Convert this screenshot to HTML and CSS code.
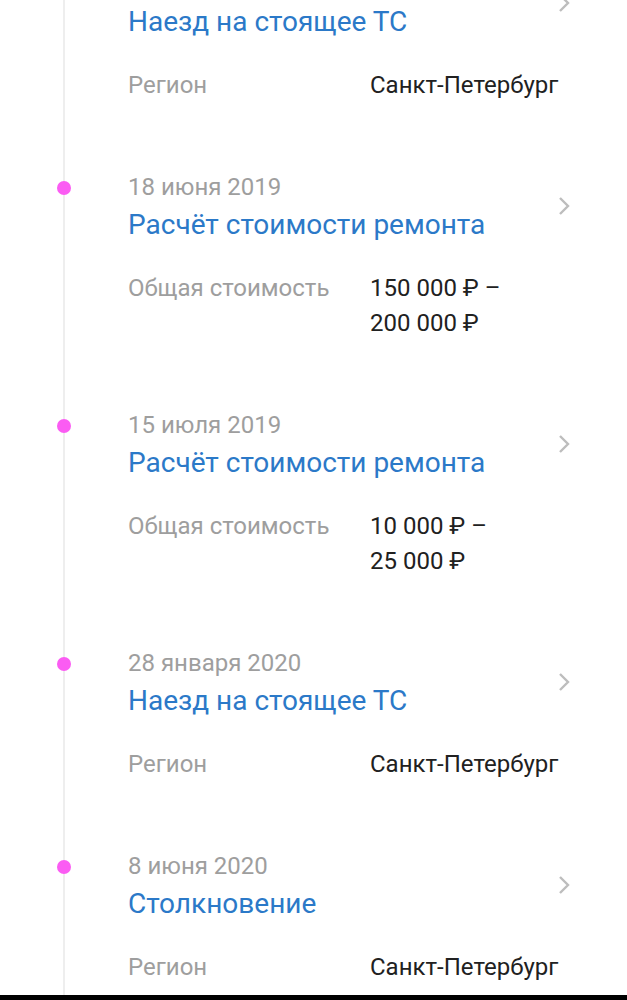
FILE: index.html
```html
<!DOCTYPE html>
<html lang="ru">

<head>
    <meta charset="UTF-8">
    <meta name="viewport" content="width=device-width, initial-scale=1.0">
    <title>История автомобиля</title>
    <link rel="stylesheet" href="styles.css">
</head>

<body>
    <div class="screen">
        <ul class="timeline">
            <li class="event">
                <div class="event-head">
                    <div class="event-text">
                        <div class="event-date">12 марта 2019</div>
                        <div class="event-title">Наезд на стоящее ТС</div>
                    </div>
                    <svg class="chevron" viewBox="0 0 12 20"><path d="M2 2l8 8-8 8"/></svg>
                </div>
                <div class="event-row">
                    <span class="row-label">Регион</span>
                    <span class="row-value">Санкт-Петербург</span>
                </div>
            </li>

            <li class="event">
                <div class="event-head">
                    <div class="event-text">
                        <div class="event-date">18 июня 2019</div>
                        <div class="event-title">Расчёт стоимости ремонта</div>
                    </div>
                    <svg class="chevron" viewBox="0 0 12 20"><path d="M2 2l8 8-8 8"/></svg>
                </div>
                <div class="event-row">
                    <span class="row-label">Общая стоимость</span>
                    <span class="row-value">150&nbsp;000&nbsp;₽ – 200&nbsp;000&nbsp;₽</span>
                </div>
            </li>

            <li class="event">
                <div class="event-head">
                    <div class="event-text">
                        <div class="event-date">15 июля 2019</div>
                        <div class="event-title">Расчёт стоимости ремонта</div>
                    </div>
                    <svg class="chevron" viewBox="0 0 12 20"><path d="M2 2l8 8-8 8"/></svg>
                </div>
                <div class="event-row">
                    <span class="row-label">Общая стоимость</span>
                    <span class="row-value">10&nbsp;000&nbsp;₽ – 25&nbsp;000&nbsp;₽</span>
                </div>
            </li>

            <li class="event">
                <div class="event-head">
                    <div class="event-text">
                        <div class="event-date">28 января 2020</div>
                        <div class="event-title">Наезд на стоящее ТС</div>
                    </div>
                    <svg class="chevron" viewBox="0 0 12 20"><path d="M2 2l8 8-8 8"/></svg>
                </div>
                <div class="event-row">
                    <span class="row-label">Регион</span>
                    <span class="row-value">Санкт-Петербург</span>
                </div>
            </li>

            <li class="event">
                <div class="event-head">
                    <div class="event-text">
                        <div class="event-date">8 июня 2020</div>
                        <div class="event-title">Столкновение</div>
                    </div>
                    <svg class="chevron" viewBox="0 0 12 20"><path d="M2 2l8 8-8 8"/></svg>
                </div>
                <div class="event-row">
                    <span class="row-label">Регион</span>
                    <span class="row-value">Санкт-Петербург</span>
                </div>
            </li>
        </ul>
    </div>
    <div class="nav-edge"></div>
</body>

</html>
```

FILE: styles.css
```css
:root {
    --blue: #2b79c8;
    --gray-text: #9e9e9e;
    --main-text: #212121;
    --line: #eeeeee;
    --dot: #fb5cf3;
}

html,
body {
    margin: 0;
    height: 100%;
}

body {
    display: flex;
    flex-direction: column;
    background: #ffffff;
    font-family: Roboto, "Noto Sans", sans-serif;
    color: var(--main-text);
}

.screen {
    flex: 1;
    overflow: hidden;
}

.nav-edge {
    height: 5px;
    background: #000000;
}

/* вертикальная линия таймлайна */
.timeline {
    list-style: none;
    margin: -31px 0 0 63px;
    padding: 0 57px 40px 0;
    border-left: 2px solid var(--line);
}

.event {
    position: relative;
    padding-left: 63px;
    margin-bottom: 69.5px;
}

.event::before {
    content: "";
    position: absolute;
    left: -8px;
    top: 9px;
    width: 14px;
    height: 14px;
    border-radius: 50%;
    background: var(--dot);
}

.event-head {
    display: flex;
    align-items: center;
    justify-content: space-between;
}

.event-date {
    font-size: 24px;
    line-height: 31px;
    color: var(--gray-text);
}

.event-title {
    margin-top: 4px;
    font-size: 28px;
    line-height: 36px;
    color: var(--blue);
}

.chevron {
    width: 12px;
    height: 20px;
    margin-top: -3px;
    fill: none;
    stroke: #bdbdbd;
    stroke-width: 2.4;
}

.event-row {
    display: grid;
    grid-template-columns: 242px 1fr;
    margin-top: 27.5px;
    font-size: 24px;
    line-height: 35px;
}

.row-label {
    color: var(--gray-text);
}

.row-value {
    color: var(--main-text);
}
```
